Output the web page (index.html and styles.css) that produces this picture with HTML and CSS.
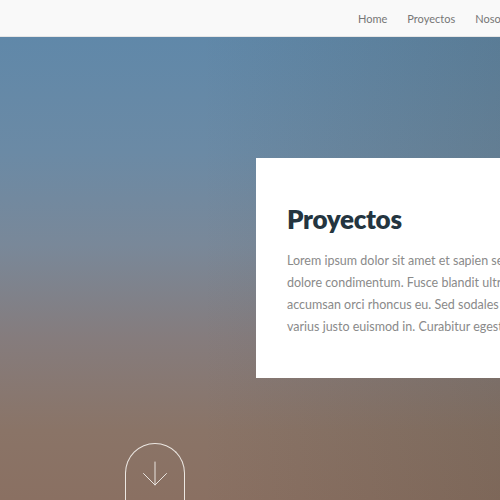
FILE: index.html
```html
<!DOCTYPE html>
<html lang="es">
<head>
<meta charset="utf-8">
<title>Proyectos</title>
<link rel="stylesheet" href="styles.css">
</head>
<body>
<header class="topbar">
  <nav class="nav">
    <a class="nav-link" href="#">Home</a>
    <a class="nav-link" href="#">Proyectos</a>
    <a class="nav-link" href="#">Nosotros</a>
  </nav>
</header>
<section class="hero">
  <div class="card">
    <h1 class="card-title">Proyectos</h1>
    <p class="card-text">
      <span class="line">Lorem ipsum dolor sit amet et sapien sed elementum egestas dolore</span>
      <span class="line">dolore condimentum. Fusce blandit ultrices sapien, in</span>
      <span class="line">accumsan orci rhoncus eu. Sed sodales venenatis arcu, id</span>
      <span class="line">varius justo euismod in. Curabitur egestas consequat lacus vel.</span>
    </p>
  </div>
  <a class="down" href="#">
    <svg width="26" height="26" viewBox="0 0 26 26" fill="none" stroke="#e9e4df" stroke-width="1" stroke-linecap="round" stroke-linejoin="round">
      <path d="M13 1 V24"/>
      <path d="M1.5 12.5 L13 24 L24.5 12.5"/>
    </svg>
  </a>
</section>
</body>
</html>
```
FILE: styles.css
```css
html, body {
  margin: 0;
  padding: 0;
  width: 500px;
  height: 500px;
  overflow: hidden;
}
body {
  font-family: Lato, "Open Sans", sans-serif;
  background: #fff;
}
.topbar {
  height: 36px;
  background: #f9f9f9;
  border-bottom: 1px solid #e6e6e6;
  display: flex;
  align-items: center;
  overflow: hidden;
}
.nav {
  display: flex;
  gap: 20px;
  padding-left: 358px;
  padding-top: 1px;
}
.nav-link {
  font-size: 11px;
  color: #767676;
  text-decoration: none;
  white-space: nowrap;
}
.hero {
  height: 463px;
  background:
    linear-gradient(90deg, rgba(0,0,0,0) 0%, rgba(0,0,0,0) 40%, rgba(50,50,35,0.14) 100%),
    linear-gradient(180deg, #6088a9 0%, #6b8aa5 25%, #798899 45%, #857c7d 65%, #8a7467 85%, #8a7062 100%);
  padding-top: 121px;
  box-sizing: border-box;
  display: flex;
  flex-direction: column;
  align-items: flex-start;
}
.card {
  margin-left: 256px;
  width: 480px;
  height: 220px;
  background: #fff;
  padding: 45px 31px 0;
  box-sizing: border-box;
  flex-shrink: 0;
}
.card-title {
  margin: 0;
  font-size: 26px;
  font-weight: 800;
  line-height: 32px;
  color: #243540;
  letter-spacing: -0.3px;
}
.card-text {
  margin: 15px 0 0;
  font-size: 12.5px;
  line-height: 22px;
  color: #8a8a8a;
}
.line {
  display: block;
  white-space: nowrap;
}
.down {
  margin-left: 125px;
  margin-top: 65px;
  width: 60px;
  height: 80px;
  border: 1px solid #ece7e2;
  border-bottom: none;
  border-radius: 31px 31px 0 0;
  display: flex;
  justify-content: center;
  padding-top: 17px;
  box-sizing: border-box;
  flex-shrink: 0;
}
```
